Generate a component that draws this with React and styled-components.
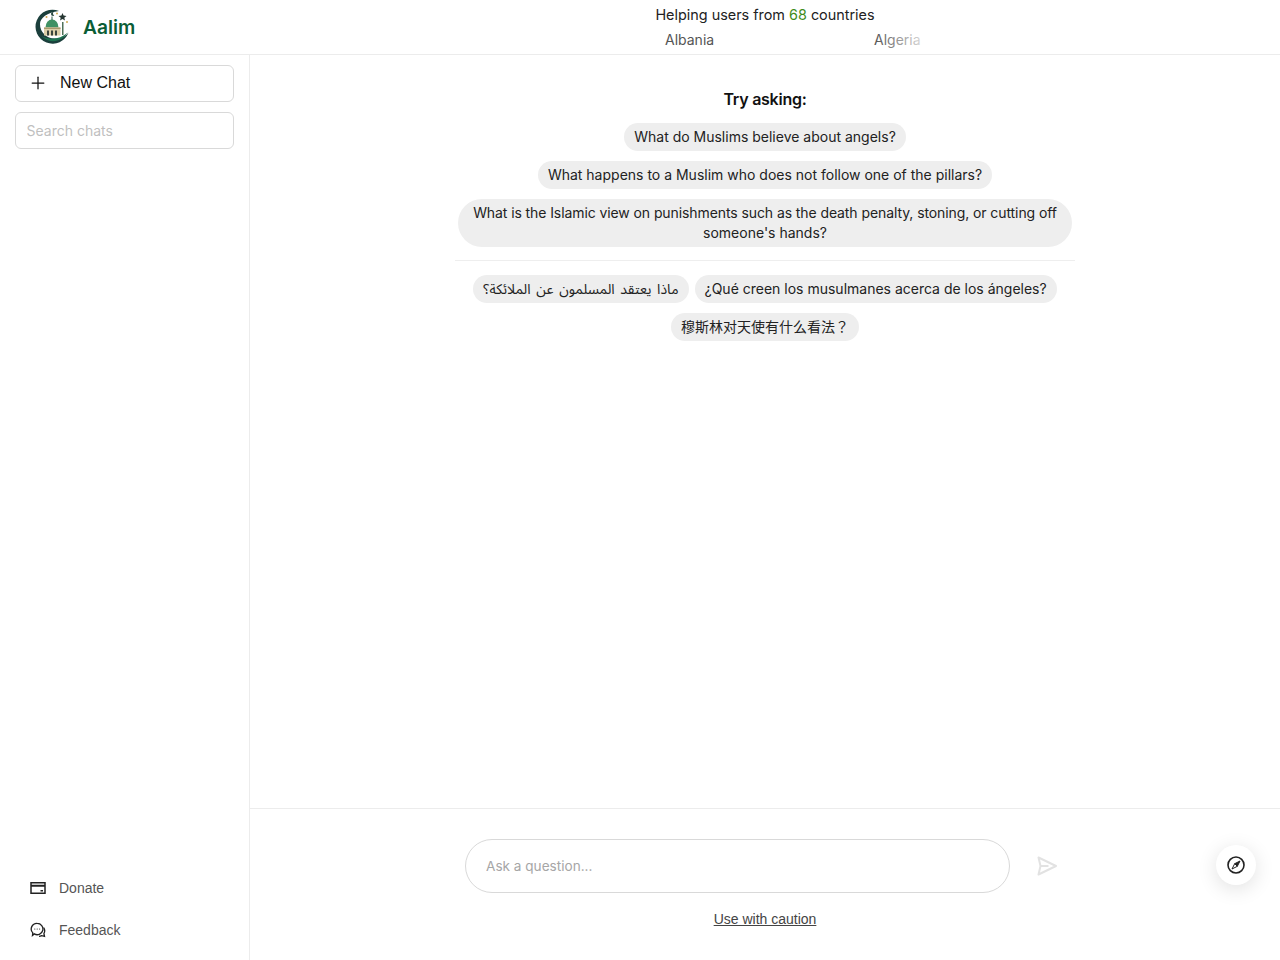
import React from 'react';
import styled, { createGlobalStyle } from 'styled-components';
import { Plus } from 'lucide-react';

const GlobalStyle = createGlobalStyle`
  html, body {
    margin: 0;
    padding: 0;
    height: 100%;
    background: #fff;
    font-family: "Inter", "Liberation Sans", sans-serif;
  }
  * { box-sizing: border-box; }
`;

function Logo() {
  return (
    <svg width="36" height="36" viewBox="0 0 36 36">
      <path d="M25 2A17 17 0 1 0 34.500 23.500 14.500 14.500 0 0 1 21 29.500 14.500 14.500 0 0 1 6 15C6 9 13 3.500 25 2Z" fill="#1b3f3c" />
      <path d="M33.500 23.500A16 16 0 0 1 7.500 27C15 31 26 31 33.500 23.500Z" fill="#1d7350" />
      <path d="M11.500 18.500a6.500 8 0 0 1 13 0Z" fill="#3f9163" />
      <rect x="17.500" y="7.500" width="1" height="3.500" fill="#2b5a46" />
      <path d="M19.500 3a2 2 0 1 0 .8 3.500 2.500 2.500 0 0 1-.8-3.500Z" fill="#2b4a42" />
      <rect x="10" y="18.500" width="16.500" height="8" fill="#dccfa8" />
      <rect x="10" y="18.500" width="16.500" height="1.500" fill="#a89a6c" />
      <rect x="13" y="21.500" width="2" height="5" fill="#3a443c" />
      <rect x="17" y="21.500" width="2" height="5" fill="#3a443c" />
      <rect x="21" y="21.500" width="2" height="5" fill="#3a443c" />
      <rect x="28" y="13" width="1.500" height="13" fill="#4f7058" />
      <path d="m28.500 4 1.100 2.600 2.900.3-2.200 1.900.7 2.800-2.500-1.500-2.500 1.500.7-2.800-2.200-1.900 2.900-.3Z" fill="#263632" />
      <circle cx="23" cy="4.500" r="1" fill="#cfa851" />
      <circle cx="33" cy="13" r="1" fill="#cfa851" />
      <circle cx="12.500" cy="8" r="1" fill="#cfa851" />
    </svg>
  );
}

function CardIcon() {
  return (
    <svg width="16" height="14" viewBox="0 0 16 14" fill="none" stroke="#222" strokeWidth="1.500">
      <rect x="1" y="1.750" width="14" height="10.500" />
      <path d="M1 4.750h14" strokeWidth="2" />
      <path d="M10.500 9.750h2.500" />
    </svg>
  );
}

function ChatIcon() {
  return (
    <svg width="16" height="16" viewBox="0 0 16 16" fill="none" stroke="#222" strokeWidth="1.300">
      <path d="M7.200 1.300a5.700 5.700 0 1 1-2.900 10.600L2.500 13.500l.3-2.600A5.700 5.700 0 0 1 7.200 1.300Z" />
      <path d="M13.600 5.500c1.300 1.900 1.400 4.200.3 6l.6 2.800-2.800-.7c-.9.500-1.800.7-2.700.7" />
      <circle cx="4.800" cy="7" r=".6" fill="#222" stroke="none" />
      <circle cx="7.200" cy="7" r=".6" fill="#222" stroke="none" />
      <circle cx="9.600" cy="7" r=".6" fill="#222" stroke="none" />
    </svg>
  );
}

function SendIcon() {
  return (
    <svg width="22" height="22" viewBox="0 0 22 22" fill="none" stroke="#e2e2e2" strokeWidth="2" strokeLinejoin="round">
      <path d="M2.500 2.500 20 11 2.500 19.500 4.500 11Z" />
      <path d="M4.500 11h8" />
    </svg>
  );
}

function CompassIcon() {
  return (
    <svg width="20" height="20" viewBox="0 0 20 20" fill="none" stroke="#222" strokeWidth="1.600">
      <circle cx="10" cy="10" r="8" />
      <path d="M14 6 11.300 11.300 8.700 8.700Z" fill="#222" strokeWidth="1" strokeLinejoin="round" />
      <path d="M6 14 8.700 8.700 11.300 11.300Z" fill="none" strokeWidth="1" strokeLinejoin="round" />
    </svg>
  );
}

export default function App() {
  return (
    <Page>
      <GlobalStyle />
      <Header>
        <Brand>
          <Logo />
          <BrandName>Aalim</BrandName>
        </Brand>
        <Stats>
          <StatsLine>
            Helping users from <Count>68</Count> countries
          </StatsLine>
          <Ticker>
            <Country>Albania</Country>
            <Country>Algeria</Country>
            <Fade />
          </Ticker>
        </Stats>
      </Header>
      <Body>
        <Sidebar>
          <SideTop>
            <NewChat>
              <Plus size={20} strokeWidth={1.500} />
              New Chat
            </NewChat>
            <Search placeholder="Search chats" />
          </SideTop>
          <SideLinks>
            <SideLink><CardIcon />Donate</SideLink>
            <SideLink><ChatIcon />Feedback</SideLink>
          </SideLinks>
        </Sidebar>
        <Main>
          <Suggestions>
            <Prompt>Try asking:</Prompt>
            <ChipGroup>
              <Chip>What do Muslims believe about angels?</Chip>
              <Chip>What happens to a Muslim who does not follow one of the pillars?</Chip>
              <Chip $tight>What is the Islamic view on punishments such as the death penalty, stoning, or cutting off someone's hands?</Chip>
            </ChipGroup>
            <Rule />
            <ChipGroup>
              <ArabicChip dir="rtl">ماذا يعتقد المسلمون عن الملائكة؟</ArabicChip>
              <Chip>¿Qué creen los musulmanes acerca de los ángeles?</Chip>
              <Chip>穆斯林对天使有什么看法？</Chip>
            </ChipGroup>
          </Suggestions>
          <Composer>
            <InputRow>
              <QuestionInput placeholder="Ask a question..." />
              <SendButton aria-label="Send"><SendIcon /></SendButton>
            </InputRow>
            <Caution href="#">Use with caution</Caution>
            <FloatButton aria-label="Explore">
              <CompassIcon />
            </FloatButton>
          </Composer>
        </Main>
      </Body>
    </Page>
  );
}

const Page = styled.div`
  height: 960px;
  display: flex;
  flex-direction: column;
  overflow: hidden;
`;

const Header = styled.header`
  height: 55px;
  flex: none;
  display: flex;
  border-bottom: 1px solid #ececec;
`;

const Brand = styled.div`
  width: 250px;
  flex: none;
  display: flex;
  align-items: center;
  gap: 13px;
  padding-left: 34px;
`;

const BrandName = styled.span`
  font-family: "Inter", sans-serif;
  font-size: 19.200px;
  font-weight: 600;
  color: #0b5d36;
`;

const Stats = styled.div`
  flex: 1;
  display: flex;
  flex-direction: column;
  align-items: center;
  padding-top: 5px;
`;

const StatsLine = styled.div`
  font-size: 14.400px;
  line-height: 20px;
  color: #222;
`;

const Count = styled.span`
  color: #3f8c1c;
`;

const Ticker = styled.div`
  position: relative;
  width: 340px;
  display: flex;
  margin-top: 5px;
  padding-left: 70px;
  overflow: hidden;
`;

const Country = styled.span`
  width: 209px;
  flex: none;
  font-size: 14px;
  line-height: 20px;
  color: #555;
`;

const Fade = styled.div`
  position: absolute;
  top: 0;
  right: 0;
  bottom: 0;
  width: 60px;
  background: linear-gradient(to right, rgba(255, 255, 255, 0), #fff);
`;

const Body = styled.div`
  flex: 1;
  min-height: 0;
  display: flex;
`;

const Sidebar = styled.aside`
  width: 250px;
  flex: none;
  display: flex;
  flex-direction: column;
  justify-content: space-between;
  border-right: 1px solid #ececec;
`;

const SideTop = styled.div`
  display: flex;
  flex-direction: column;
  gap: 10px;
  padding: 10px 15px 0;
`;

const NewChat = styled.button`
  height: 37px;
  display: flex;
  align-items: center;
  gap: 12px;
  padding: 0 12px 2px;
  background: #fff;
  border: 1px solid #d9d9d9;
  border-radius: 6px;
  font-family: "Liberation Sans", sans-serif;
  font-size: 16px;
  color: #111;
`;

const Search = styled.input`
  height: 37px;
  padding: 0 10.500px;
  border: 1px solid #d9d9d9;
  border-radius: 6px;
  outline: none;
  font-family: "Inter", sans-serif;
  font-size: 14px;

  &::placeholder {
    color: #bfbfbf;
    opacity: 1;
  }
`;

const SideLinks = styled.nav`
  display: flex;
  flex-direction: column;
  gap: 22px;
  padding: 0 0 20px 30px;
`;

const SideLink = styled.a`
  height: 20px;
  display: flex;
  align-items: center;
  gap: 13px;
  font-family: "Liberation Sans", sans-serif;
  font-size: 14px;
  color: #555;
`;

const Main = styled.main`
  flex: 1;
  min-width: 0;
  display: flex;
  flex-direction: column;
`;

const Suggestions = styled.section`
  flex: 1;
  width: 620px;
  margin: 0 auto;
  padding-top: 33px;
  display: flex;
  flex-direction: column;
  align-items: center;
`;

const Prompt = styled.h2`
  margin: 0 0 13px;
  font-size: 16px;
  line-height: 22px;
  font-weight: 600;
  letter-spacing: -0.250px;
  color: #111;
`;

const ChipGroup = styled.div`
  display: flex;
  flex-wrap: wrap;
  justify-content: center;
  gap: 10px 6px;
`;

const Chip = styled.button`
  max-width: 614px;
  padding: 4px 10px;
  background: #eeeeee;
  border: 0;
  border-radius: 24px;
  font-family: "Inter", "Noto Sans Arabic", "Noto Sans CJK JP", sans-serif;
  font-size: 14px;
  line-height: 20px;
  color: #222;

  &::first-line {
    letter-spacing: ${({ $tight }) => ($tight ? '-0.090px' : 'normal')};
  }
`;

const ArabicChip = styled(Chip)`
  word-spacing: 1.750px;
`;

const Rule = styled.hr`
  width: 620px;
  height: 1px;
  margin: 13px 0 14px;
  border: 0;
  background: #eeeeee;
`;

const Composer = styled.footer`
  position: relative;
  height: 152px;
  flex: none;
  display: flex;
  flex-direction: column;
  align-items: center;
  padding-top: 30px;
  border-top: 1px solid #ececec;
`;

const InputRow = styled.div`
  display: flex;
  align-items: center;
  gap: 16px;
  margin-left: 3px;
`;

const QuestionInput = styled.input`
  width: 545px;
  height: 54px;
  padding: 0 20px 1px;
  border: 1px solid #d9d9d9;
  border-radius: 27px;
  outline: none;
  font-family: "Inter", sans-serif;
  font-size: 13.600px;

  &::placeholder {
    color: #a6a6a6;
    opacity: 1;
  }
`;

const SendButton = styled.button`
  width: 42px;
  height: 42px;
  display: flex;
  align-items: center;
  justify-content: center;
  padding: 0;
  background: none;
  border: 0;
`;

const Caution = styled.a`
  margin-top: 17px;
  font-family: "Liberation Sans", sans-serif;
  font-size: 14px;
  line-height: 18px;
  color: #444;
  text-decoration: underline;
`;

const FloatButton = styled.button`
  position: absolute;
  top: 36px;
  right: 24px;
  width: 40px;
  height: 40px;
  display: flex;
  align-items: center;
  justify-content: center;
  padding: 0;
  background: #fff;
  border: 0;
  border-radius: 50%;
  box-shadow: 0 4px 20px rgba(0, 0, 0, 0.12);
`;
